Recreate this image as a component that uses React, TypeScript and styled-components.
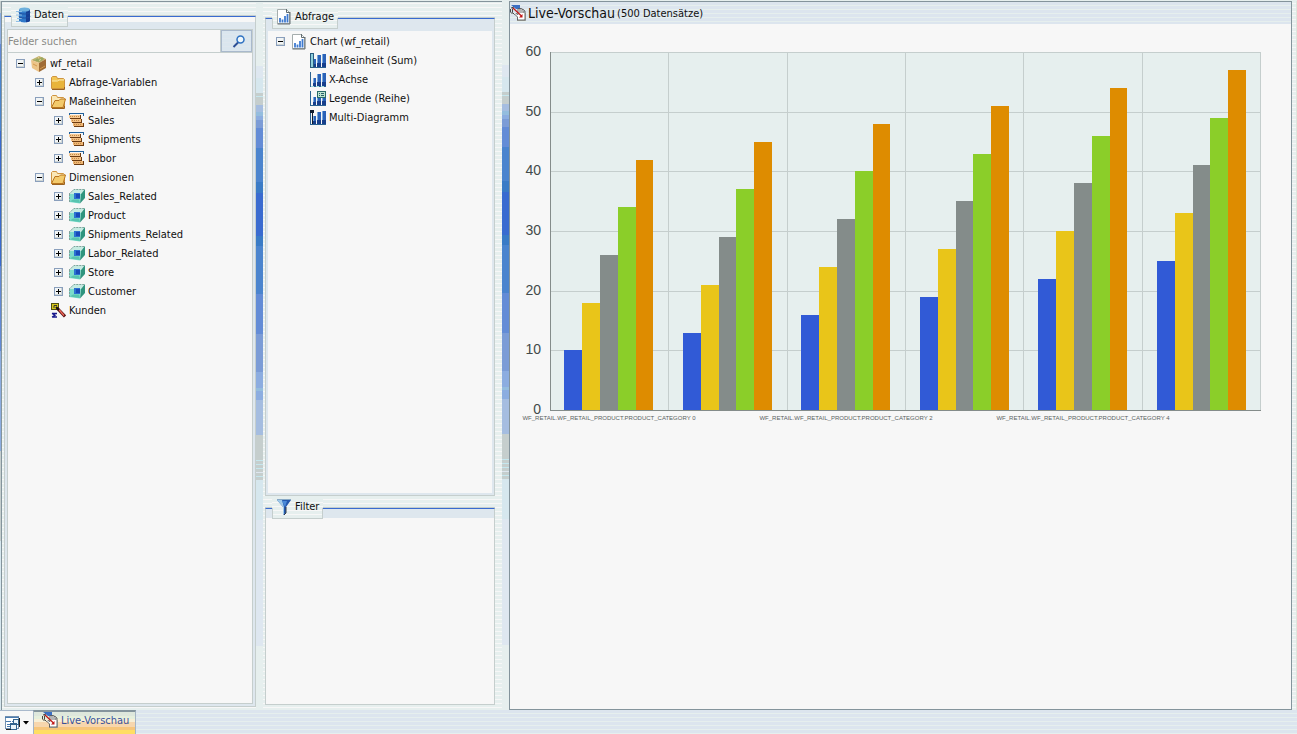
import React from "react";
import styled, { createGlobalStyle } from "styled-components";

const color = {
  paper: "#f7f7f7",
  mist: "#e6efee",
  ice: "#dee7ee",
  line: "#c5cecd",
  frame: "#84949c",
  accent: "#396bd0",
};

const stripes = (base: string, thread: string) =>
  `repeating-linear-gradient(to bottom, ${base} 0 3px, ${thread} 3px 4px)`;

const GlobalStyle = createGlobalStyle`
  *, *::before, *::after { box-sizing: border-box; }
  body {
    margin: 0;
    background: ${color.mist};
    color: #101010;
    font: 11px/19px "DejaVu Sans Condensed", "DejaVu Sans", Tahoma, sans-serif;
  }
  button, input { font: inherit; color: inherit; margin: 0; padding: 0; border: 0; border-radius: 0; }
  ul { list-style: none; margin: 0; padding: 0; }
  h1, h2 { margin: 0; font: inherit; }
  svg { display: block; flex: none; }
`;

const Screen = styled.div`
  display: flex;
  flex-direction: column;
  min-height: 100vh;
`;

const Main = styled.main`
  display: flex;
  flex: 1;
  padding-top: 1px;
  background: ${stripes(color.mist, color.paper)};
`;

const EdgeStrip = styled.div`
  width: 1px;
  background: linear-gradient(
    to bottom, #c5cecd 0 12px, #8cade0 12px 43px, #628ad6 43px 60px, #4a86cf 60px 130px,
    #396bd0 130px 265px, #628ad6 265px 350px, #8cade0 350px 450px, #c5cecd 450px 540px,
    #d6e7ee 540px
  );
`;

const Workspace = styled.div`
  display: flex;
  border-top: 1px solid ${color.frame};
  border-left: 1px solid ${color.frame};
`;

const Splitter = styled.div`
  width: 7px;
  flex: none;
  background: linear-gradient(
    to bottom, ${color.mist} 0 64px, #dee7f0 64px 76px, #d6e7ee 76px 91px, #c5cecd 91px 94px,
    #c5e7ee 94px 95px, #c5cecd 95px 103px, #a5bde0 103px 110px, #94bdde 110px 114px,
    #8cade0 114px 118px, #7b9cd6 118px 126px, #638cd6 126px 146px, #4a84ce 146px 180px,
    #397bc6 180px 191px, #396bd0 191px 234px, #397bc6 234px 244px, #4a84ce 244px 292px,
    #638cd6 292px 332px, #7b9cd6 332px 370px, #8cade0 370px 386px, #94bdde 386px 389px,
    #8cade0 389px 398px, #a5bde0 398px 433px, #c5cecd 433px 458px, #c5e7ee 458px 459px,
    #c5cecd 459px 462px, #c5e7ee 462px 463px, #c5cecd 463px 466px, #c5e7ee 466px 467px,
    #c5cecd 467px 470px, #dee7f0 470px 471px, #c5cecd 471px 474px, #c5e7ee 474px 475px,
    #c5cecd 475px 478px, #d6e7ee 478px 518px, #dee7f0 518px 644px, ${color.mist} 644px
  );
`;

const DataColumn = styled.div`
  display: flex;
  width: 254px;
  padding: 14px 0 3px 2px;
`;

const QueryColumn = styled.div`
  display: flex;
  flex-direction: column;
  gap: 12px;
  width: 239px;
  padding: 16px 7px 5px 2px;
`;

const Group = styled.section<{ $height?: number }>`
  position: relative;
  display: flex;
  flex-direction: column;
  flex: ${(p) => (p.$height ? `0 0 ${p.$height}px` : "1")};
  border: 1px solid ${color.line};
  border-top-color: ${color.accent};
  box-shadow: 0 -1px 0 ${color.line};
`;

const Legend = styled.h2`
  position: absolute;
  top: -10px;
  left: 6px;
  display: flex;
  align-items: flex-start;
  gap: 3px;
  height: 20px;
  padding: 0 4px;
  line-height: 15px;
  background: ${stripes(color.mist, color.paper)};

  &::after {
    content: "";
    position: absolute;
    inset: 9px 0 0;
    border: 1px solid ${color.line};
    border-top: 0;
  }
`;

const GroupBody = styled.div<{ $inset: number; $top: number }>`
  display: flex;
  flex-direction: column;
  flex: 1;
  border: 0 solid ${color.ice};
  border-width: ${(p) => `${p.$top}px ${p.$inset}px ${p.$inset}px`};
  background: ${color.paper};
`;

const DataBack = styled.div`
  display: flex;
  flex-direction: column;
  flex: 1;
  background: linear-gradient(${color.paper} 0 5px, ${color.ice} 5px);
`;

const DataBody = styled.div`
  display: flex;
  flex-direction: column;
  flex: 1;
  margin: 12px 2px 2px;
  border: 1px solid ${color.line};
  background: ${color.paper};
`;

const SearchRow = styled.form`
  display: flex;
  height: 23px;
  border-bottom: 1px solid ${color.line};
`;

const SearchInput = styled.input`
  flex: 1;
  min-width: 0;
  border-right: 1px solid ${color.line};
  background: transparent;
  outline: none;

  &::placeholder { color: #8a8a86; opacity: 1; }
`;

const SearchButton = styled.button`
  display: grid;
  place-items: center;
  width: 31px;
  padding-left: 4px;
  border: 1px solid #a9b9cc;
  background: ${stripes("#dae6ee", color.ice)};
`;

const Tree = styled.ul`
  padding: 1px 0 0 8px;
`;

const TreeRow = styled.li<{ $level: number }>`
  display: flex;
  align-items: center;
  height: 19px;
  padding-left: ${(p) => p.$level * 19}px;
  white-space: nowrap;
`;

const Expander = styled.button`
  width: 9px;
  height: 9px;
  margin-right: 6px;
  background: none;
`;

const NoExpander = styled.span`
  width: 15px;
`;

const IconSlot = styled.span`
  width: 19px;
`;

const Preview = styled.section`
  flex: 1;
  min-width: 0;
  border: 1px solid ${color.frame};
  background: ${color.paper};
`;

const PreviewHeader = styled.header`
  display: flex;
  align-items: center;
  height: 22px;
  gap: 2px;
  background: ${stripes("#dce5ee", color.mist)};
`;

const PreviewTitle = styled.h1`
  font-size: 14px;
`;

const RightEdge = styled.div`
  width: 5px;
  border-right: 1px solid #dee7dc;
`;

const ChartSvg = styled.svg`
  width: 100%;
  height: auto;
  font-family: "Liberation Sans", Arial, sans-serif;
`;

const TaskBar = styled.footer`
  display: flex;
  height: 24px;
  background: ${stripes("#dce5ee", color.mist)};
`;

const LayoutButton = styled.button`
  display: flex;
  align-items: center;
  gap: 3px;
  width: 33px;
  padding-left: 4px;
  border-top: 1px solid #a9b9cc;
  background: ${color.paper};
`;

const TaskButton = styled.button`
  display: flex;
  gap: 3px;
  width: 103px;
  padding-left: 8px;
  border: 1px solid #a5b5c5;
  border-top: 2px solid ${color.frame};
  border-bottom: 0;
  line-height: 17px;
  color: #39529c;
  background: linear-gradient(
    #dee7dc 0 4px, #e6efdc 4px 7px, #f7efd6 7px 10px, #f7d6ad 10px 15px, #f7c67b 15px 18px, #ffde63 18px
  );
`;

/* ---------- icons ---------- */

const ExpanderGlyph = ({ open }: { open: boolean }) => (
  <svg width="9" height="9" viewBox="0 0 9 9" shapeRendering="crispEdges">
    <rect x="0.5" y="0.5" width="8" height="8" rx="1" fill="#f2f5f6" stroke="#8a9fbc" />
    <path d="M1 7.500h6.500V1" fill="none" stroke="#d0d6d5" />
    <path d={open ? "M2 4.500h5" : "M2 4.500h5M4.500 2v5"} stroke="#000" />
  </svg>
);

const DatabaseIcon = () => (
  <svg width="16" height="16" viewBox="0 0 16 16">
    <path d="M4 2.500v11c0 2.500 11 2.500 11 0v-11z" fill="#2f78c8" />
    <path d="M11 2h4v11.500c0 1-1.500 1.500-4 1.800z" fill="#163f94" />
    <path d="M1 4.500h6M1 8h6M2 11.500h5M1 14.500h5" stroke="#8fbfe6" />
    <path d="M4 5.500c0 2 11 2 11 0M4 9.500c0 2 11 2 11 0" fill="none" stroke="#1c4d9f" />
    <ellipse cx="9.500" cy="2.500" rx="5.500" ry="2" fill="#6db0dd" />
  </svg>
);

const BoxIcon = () => (
  <svg width="16" height="16" viewBox="0 0 16 16">
    <path d="M0 4 8 0l7 3-7 4z" fill="#c5b06a" />
    <path d="M0 4l8 3v9l-7-4z" fill="#ecc488" />
    <path d="M15 3v9l-7 4V7z" fill="#a06c36" />
    <path d="M2 4l3-2 3 1 3-2 2 2-5 3z" fill="#9aa862" />
    <path d="M4 3.500l1-1M8 4.500l2-1M7 2l1-.5" stroke="#e5dba0" />
    <path d="M2 8l4 2M9 13l5-3" stroke="#d39a50" />
  </svg>
);

const FolderIcon = ({ open }: { open?: boolean }) => (
  <svg width="16" height="16" viewBox="0 0 16 16">
    <path d="M1.500 13.500v-11l1-1h4l1 2h6l1 1v9z" fill={open ? "#fae8b8" : "#f2c653"} stroke="#cf9440" />
    {open ? (
      <path d="M1.500 13.500 5 6.500h4L10.500 5h5L13 13.500z" fill="#f3ca6b" stroke="#b9741f" />
    ) : (
      <>
        <path d="M2 6h5.500L9 5h5v8H2z" fill="#e8b43c" />
        <path d="M2 6h5.500L9 5h5" fill="none" stroke="#fbeab0" />
      </>
    )}
    <path d="M2 14.500h12.500V12" fill="none" stroke="#9a6320" />
  </svg>
);

const MeasureIcon = () => (
  <svg width="16" height="16" viewBox="0 0 16 16" shapeRendering="crispEdges">
    <path d="M.5 3V.5h14V3" fill="none" stroke="#21619c" />
    <path d="M4 10h11v4H5z" fill="#6b3a10" />
    <path d="M4 10h10v3H4z" fill="#eeb573" />
    <path d="M2 6h11v4H3z" fill="#6b3a10" />
    <path d="M2 6h10v3H2z" fill="#f4c083" />
    <path d="M0 2h12v4H1z" fill="#6b3a10" />
    <path d="M0 2h11v3H0z" fill="#f7ca94" />
    <path d="M1 3.500h9M3 7.500h8M5 11.500h8" stroke="#c08a48" strokeDasharray="1 1" />
  </svg>
);

const CubeIcon = () => (
  <svg width="16" height="16" viewBox="0 0 16 16">
    <path d="M0 5 5 0h11l-4 5z" fill="#c5ebe2" />
    <path d="M0 5h12l-1 9.500L0 13z" fill="#7bdccb" />
    <path d="M12 5l4-5v9l-5 5.500z" fill="#2f947e" />
    <path d="M0 5 5 .5h11M.5 5v8" fill="none" stroke="#7fa29b" strokeDasharray="2 1" />
    <path d="M5 4h6v6H5z" fill="#2b72d2" />
    <path d="M7 5h4v4H7z" fill="#184ab8" />
    <path d="M1 12.500l3-2h6l1 3.500z" fill="#58c4b0" />
  </svg>
);

const KundenIcon = () => (
  <svg width="16" height="16" viewBox="0 0 16 16">
    <rect x="1.500" y="0.500" width="7" height="6" fill="#d6c61a" stroke="#505010" />
    <path d="M4 5V2.500h3" fill="none" stroke="#333" />
    <path d="M2 10.500h5M2 14h5M2 10.500l3 1.700-3 1.800" fill="none" stroke="#18188c" strokeWidth="1.300" />
    <path d="M7 5l8 8.500" stroke="#5a1010" strokeWidth="3" />
    <path d="M8.500 6l5.500 6.500" stroke="#f0685a" strokeWidth="1.400" />
    <path d="M6 4l3 3" stroke="#111" strokeWidth="2" />
  </svg>
);

const ChartPageIcon = () => (
  <svg width="16" height="16" viewBox="0 0 16 16">
    <path d="M1.500.5h9l3 3v11h-12z" fill="#fff" stroke="#a5adad" />
    <path d="M10.500 0v3.500H14M14 3v12H1.500" fill="none" stroke="#626d70" />
    <path d="M4 9v4.500M6.500 10.500v3M9 7v6.500M11.500 5v8.500" stroke="#3f7bd0" strokeWidth="1.800" />
  </svg>
);

type BarVariant = "measure" | "axis" | "legend" | "multi";
const BarsIcon = ({ variant }: { variant: BarVariant }) => (
  <svg width="16" height="16" viewBox="0 0 16 16" shapeRendering="crispEdges">
    <path d="M.5 0v14.500H16" fill="none" stroke="#2b6291" />
    <path d="M3 6h3v8H3zM7 2h4v12H7zM12 1h4v13h-4z" fill="#2a62b8" />
    <path d="M7 2h1v9H7zM12 1h1v9h-1zM3 6h1v5H3z" fill="#7aa9db" />
    <path d="M3 11h3v3H3zM7 10h4v4H7zM12 10h4v4h-4z" fill="#173f8c" />
    {variant === "measure" && <path d="M.5.5h3v14h-3z" fill="#8fd0dc" stroke="#285c80" />}
    {variant === "axis" && <path d="M1 14.500h15" stroke="#9fd8de" strokeDasharray="3 2" />}
    {variant === "legend" && (
      <>
        <path d="M7.500.5h8v6h-8z" fill="#bde4cf" stroke="#286b69" />
        <path d="M9 2.500h1m1 0h3M9 4.500h1m1 0h3" stroke="#28606b" />
      </>
    )}
    {variant === "multi" && <path d="M0 0h4v3H0zM2 3h1v11H2z" fill="#101c30" />}
  </svg>
);

const FilterIcon = () => (
  <svg width="16" height="16" viewBox="0 0 16 16">
    <path d="M1 1h14l-5 7v6l-3 2V8z" fill="#2459ae" />
    <path d="M1 1h5l2 7v7l-1 1V8z" fill="#9fc9e8" />
    <path d="M6 2h5L9 8z" fill="#4a8ad8" />
    <path d="M1 .5h14" stroke="#88a9c6" />
    <path d="M10 8v6l-2 2" fill="none" stroke="#333c48" />
  </svg>
);

const SearchIcon = () => (
  <svg width="14" height="14" viewBox="0 0 14 14">
    <circle cx="8.500" cy="5.500" r="3.500" fill="#eef7fb" stroke="#2f72c2" strokeWidth="1.500" />
    <path d="M6 8.500 1.500 13" stroke="#2c4f94" strokeWidth="2" />
  </svg>
);

const PreviewIcon = () => (
  <svg width="16" height="16" viewBox="0 0 16 16">
    <path d="M1 0h9v4H6z" fill="#3b6fc4" />
    <path d="M.5 4v3l2 2M2.500 3.500v4l2 2M1 3l3-1" fill="none" stroke="#333" strokeWidth="0.900" />
    <path
      d="M7.500 15v-3L5 9.500 6 8.500l2 1V4l1-.8L10 4l1-1 1 1.500 1-.5 1 1.500 1 .5V15z"
      fill="#fff" stroke="#444" strokeWidth="0.800"
    />
    <path d="M10 4v4M12 4.500V8M13.800 5.500V8" stroke="#444" strokeWidth="0.800" />
    <path d="M3 3l8.500 8" stroke="#c01414" strokeWidth="1.200" />
    <path d="M12.500 9v3.500H9z" fill="#c01414" />
    <path d="M7 15.500h8.500V8" fill="none" stroke="#8b8b86" />
  </svg>
);

const WindowsIcon = () => (
  <svg width="16" height="16" viewBox="0 0 16 16" shapeRendering="crispEdges">
    <path d="M1.500 1.500h13v12h-13z" fill="#fff" stroke="#7390b0" />
    <path d="M1 2.500h14M2 6.500h5M8 6.500h6M3 9.500h4M3 11.500h4" stroke="#4a7bb0" />
    <path d="M9.500 4.500h5v5h-5zM6.500 8.500h6v6h-6z" fill="#eaf4fa" stroke="#31618c" />
    <path d="M7 9.500h6" stroke="#31618c" />
    <path d="M2 14.500h5M15.500 3v9" stroke="#222" />
  </svg>
);

const CaretIcon = () => (
  <svg width="7" height="4" viewBox="0 0 7 4">
    <path d="M0 0h6L3 3.500z" fill="#000" />
  </svg>
);

/* ---------- trees ---------- */

interface Node {
  label: string;
  level: number;
  icon: React.ReactNode;
  open?: boolean;
}

const dataNodes: Node[] = [
  { label: "wf_retail", level: 0, icon: <BoxIcon />, open: true },
  { label: "Abfrage-Variablen", level: 1, icon: <FolderIcon />, open: false },
  { label: "Maßeinheiten", level: 1, icon: <FolderIcon open />, open: true },
  ...["Sales", "Shipments", "Labor"].map((label) => ({
    label, level: 2, icon: <MeasureIcon />, open: false,
  })),
  { label: "Dimensionen", level: 1, icon: <FolderIcon open />, open: true },
  ...["Sales_Related", "Product", "Shipments_Related", "Labor_Related", "Store", "Customer"].map((label) => ({
    label, level: 2, icon: <CubeIcon />, open: false,
  })),
  { label: "Kunden", level: 1, icon: <KundenIcon /> },
];

const queryNodes: Node[] = [
  { label: "Chart (wf_retail)", level: 0, icon: <ChartPageIcon />, open: true },
  { label: "Maßeinheit (Sum)", level: 1, icon: <BarsIcon variant="measure" /> },
  { label: "X-Achse", level: 1, icon: <BarsIcon variant="axis" /> },
  { label: "Legende (Reihe)", level: 1, icon: <BarsIcon variant="legend" /> },
  { label: "Multi-Diagramm", level: 1, icon: <BarsIcon variant="multi" /> },
];

const TreeView = ({ nodes }: { nodes: Node[] }) => (
  <Tree>
    {nodes.map((n) => (
      <TreeRow key={n.label} $level={n.level}>
        {n.open === undefined ? (
          <NoExpander />
        ) : (
          <Expander type="button" aria-label={n.label} aria-expanded={n.open}>
            <ExpanderGlyph open={n.open} />
          </Expander>
        )}
        <IconSlot>{n.icon}</IconSlot>
        <span>{n.label}</span>
      </TreeRow>
    ))}
  </Tree>
);

/* ---------- chart ---------- */

const series = ["#315ad6", "#e9c519", "#848c8a", "#8bce29", "#de8c00"];
const groups = [0, 1, 2, 3, 4, 5].map((c) => series.map((_, s) => 10 + c * 3 + s * 8));
const plot = { left: 40, top: 28, width: 711, height: 358 };
const slot = 118.5;
const bar = 17.8;
const yOf = (v: number) => Math.round(plot.top + plot.height * (1 - v / 60) + 0.1);
const barX = (g: number, s: number) => Math.round(plot.left + slot * g + 14.4 + bar * s);

const Chart = () => (
  <ChartSvg viewBox="0 0 781 410" role="img" aria-label="Live-Vorschau">
    <rect x={plot.left} y={plot.top} width={plot.width} height={plot.height} fill={color.mist} />
    <g stroke={color.line} shapeRendering="crispEdges">
      {[10, 20, 30, 40, 50, 60].map((v) => (
        <line key={v} x1={plot.left} x2={plot.left + plot.width} y1={yOf(v) + 0.5} y2={yOf(v) + 0.5} />
      ))}
      {groups.map((_, i) => {
        const x = Math.floor(plot.left + (slot - 0.1) * (i + 1) + 0.3) + 0.5;
        return <line key={i} x1={x} x2={x} y1={plot.top} y2={plot.top + plot.height} />;
      })}
    </g>
    <g fontSize="14" fill="#424a4a" textAnchor="end">
      {[0, 10, 20, 30, 40, 50, 60].map((v) => (
        <text key={v} x="31" y={yOf(v) + 4}>{v}</text>
      ))}
    </g>
    {groups.map((values, g) =>
      values.map((v, s) => (
        <rect
          key={`${g}-${s}`} x={barX(g, s)} y={yOf(v)} width={barX(g, s + 1) - barX(g, s)}
          height={plot.top + plot.height - yOf(v)} fill={series[s]} shapeRendering="crispEdges"
        />
      ))
    )}
    <path
      d={`M${plot.left + 0.5} ${plot.top}v${plot.height + 0.5}h${plot.width - 0.5}`}
      fill="none" stroke="#848c8a" shapeRendering="crispEdges"
    />
    <g fontSize="6" fill="#5a6262" textAnchor="middle">
      {[0, 2, 4].map((c) => (
        <text key={c} x={plot.left + slot * c + 59} y="396">
          {`WF_RETAIL.WF_RETAIL_PRODUCT.PRODUCT_CATEGORY ${c}`}
        </text>
      ))}
    </g>
  </ChartSvg>
);

export default function App() {
  return (
    <Screen>
      <GlobalStyle />
      <Main>
        <EdgeStrip />
        <Workspace>
          <DataColumn>
            <Group>
              <DataBack>
                <DataBody>
                  <SearchRow onSubmit={(e) => e.preventDefault()}>
                    <SearchInput type="text" placeholder="Felder suchen" aria-label="Felder suchen" />
                    <SearchButton type="submit" aria-label="Suchen"><SearchIcon /></SearchButton>
                  </SearchRow>
                  <TreeView nodes={dataNodes} />
                </DataBody>
              </DataBack>
              <Legend><DatabaseIcon />Daten</Legend>
            </Group>
          </DataColumn>
          <Splitter />
          <QueryColumn>
            <Group>
              <GroupBody $inset={2} $top={12}>
                <TreeView nodes={queryNodes} />
              </GroupBody>
              <Legend><ChartPageIcon />Abfrage</Legend>
            </Group>
            <Group $height={197}>
              <GroupBody $inset={0} $top={9} />
              <Legend><FilterIcon />Filter</Legend>
            </Group>
          </QueryColumn>
        </Workspace>
        <Splitter />
        <Preview>
          <PreviewHeader>
            <PreviewIcon />
            <PreviewTitle>Live-Vorschau</PreviewTitle>
            <span>(500 Datensätze)</span>
          </PreviewHeader>
          <Chart />
        </Preview>
        <RightEdge />
      </Main>
      <TaskBar>
        <LayoutButton type="button" aria-label="Layout"><WindowsIcon /><CaretIcon /></LayoutButton>
        <TaskButton type="button"><PreviewIcon />Live-Vorschau</TaskButton>
      </TaskBar>
    </Screen>
  );
}
